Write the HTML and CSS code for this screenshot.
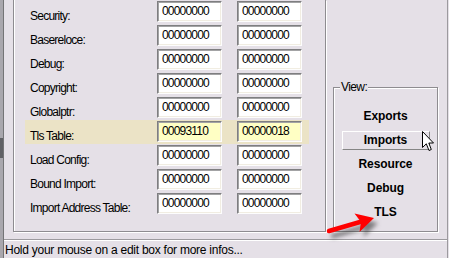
FILE: index.html
```html
<!DOCTYPE html>
<html>
<head>
<meta charset="utf-8">
<link rel="stylesheet" href="styles.css">
</head>
<body>
<div class="screen">
  <div class="edge"></div>
  <div class="app">
    <div class="content">
      <div class="dirs">
        <div class="row"><span class="lbl">Security:</span><span class="box">00000000</span><span class="box">00000000</span></div>
        <div class="row"><span class="lbl">Basereloce:</span><span class="box">00000000</span><span class="box">00000000</span></div>
        <div class="row"><span class="lbl">Debug:</span><span class="box">00000000</span><span class="box">00000000</span></div>
        <div class="row"><span class="lbl">Copyright:</span><span class="box">00000000</span><span class="box">00000000</span></div>
        <div class="row"><span class="lbl">Globalptr:</span><span class="box">00000000</span><span class="box">00000000</span></div>
        <div class="row hl"><span class="lbl">Tls Table:</span><span class="box sel">00093110</span><span class="box sel">00000018</span></div>
        <div class="row"><span class="lbl">Load Config:</span><span class="box">00000000</span><span class="box">00000000</span></div>
        <div class="row"><span class="lbl">Bound Import:</span><span class="box">00000000</span><span class="box">00000000</span></div>
        <div class="row"><span class="lbl">Import Address Table:</span><span class="box">00000000</span><span class="box">00000000</span></div>
      </div>
      <fieldset class="view">
        <legend>View:</legend>
        <div class="btn">Exports</div>
        <div class="btn hover">Imports</div>
        <div class="btn">Resource</div>
        <div class="btn">Debug</div>
        <div class="btn">TLS</div>
      </fieldset>
    </div>
    <div class="status">Hold your mouse on a edit box for more infos...</div>
  </div>
  <svg class="arrow" width="70" height="40" viewBox="0 0 70 40">
    <line x1="9" y1="26" x2="40" y2="17" stroke="#f00" stroke-width="4.5" stroke-linecap="round"/>
    <polygon points="34.5,8.5 54,13 39.5,27 41,17" fill="#f00"/>
  </svg>
  <svg class="cursor" width="13" height="21" viewBox="0 0 13 21">
    <path d="M0.5,0.5 L0.5,16.5 L4.3,12.8 L7,19.5 L9.3,18.5 L6.8,12 L11.5,12 Z" fill="#fff" stroke="#000" stroke-width="1" stroke-linejoin="miter"/>
  </svg>
</div>
</body>
</html>
```

FILE: styles.css
```css
html, body {
  margin: 0;
  padding: 0;
}
body {
  background: #e5e0e7;
  font-family: "Liberation Sans", Arial, sans-serif;
  font-size: 12px;
  color: #000;
  overflow: hidden;
}
.screen {
  position: relative;
  display: flex;
  width: 449px;
  height: 258px;
  padding-right: 1px;
  box-sizing: border-box;
}
.edge {
  width: 3px;
  border-right: 1px solid #747476;
  background: linear-gradient(#a9a7ad 0 138px, #616165 138px 158px, #a9a7ad 158px);
}
.app {
  flex: 1;
  display: flex;
  flex-direction: column;
  border-right: 1px solid #9c9a9e;
}
.content {
  height: 239px;
  display: flex;
  align-items: flex-start;
  padding-left: 9px;
  box-sizing: border-box;
}
.dirs {
  box-sizing: border-box;
  width: 313px;
  height: 232px;
  border: 1px solid #8e8c90;
  border-top: none;
  box-shadow: inset 1px 0 0 #fff, 1px 1px 0 #fff;
  padding-left: 11px;
}
.row {
  display: flex;
  width: 284px;
  height: 24px;
  box-sizing: border-box;
  padding-top: 1px;
  padding-left: 5px;
}
.row.hl {
  background: #ebe3c6;
}
.lbl {
  width: 127px;
  padding-top: 8px;
  line-height: 14px;
  letter-spacing: -0.75px;
  white-space: nowrap;
}
.box {
  box-sizing: border-box;
  width: 65px;
  height: 21px;
  background: #fff;
  border: 1px solid;
  border-color: #7e7e80 #fdfdfd #fdfdfd #7e7e80;
  box-shadow: inset 1px 1px 0 #a3a3a5, inset -1px -1px 0 #f1ede2;
  padding-left: 4px;
  line-height: 19px;
  letter-spacing: -0.8px;
}
.box + .box {
  margin-left: 15px;
}
.box.sel {
  background: #ffffc4;
}
.view {
  margin: 80px 0 0 7px;
  box-sizing: border-box;
  width: 105px;
  height: 152px;
  min-width: 0;
  border: 1px solid #8e8c90;
  box-shadow: inset 1px 1px 0 #fff, 1px 1px 0 #fff;
  padding: 13px 0 0;
}
.view legend {
  padding: 0 1px;
  margin-left: 6px;
  line-height: 14px;
  background: #e5e0e7;
  letter-spacing: -0.6px;
}
.btn {
  box-sizing: border-box;
  width: 88px;
  height: 19px;
  margin: 0 auto 5px;
  border: 1px solid transparent;
  text-align: center;
  font-weight: bold;
  line-height: 17px;
  letter-spacing: -0.1px;
}
.btn.hover {
  border-color: #fff #858585 #858585 #fff;
}
.status {
  flex: 1;
  border-top: 1px solid #9c9a9e;
  box-shadow: inset 0 1px 0 #fff;
  padding: 3px 0 0 1px;
  line-height: 14px;
  letter-spacing: -0.25px;
  white-space: nowrap;
}
.arrow {
  position: absolute;
  left: 320px;
  top: 205px;
  filter: drop-shadow(4px 5px 2px rgba(40, 40, 40, 0.55));
}
.cursor {
  position: absolute;
  left: 422px;
  top: 131px;
}
```
